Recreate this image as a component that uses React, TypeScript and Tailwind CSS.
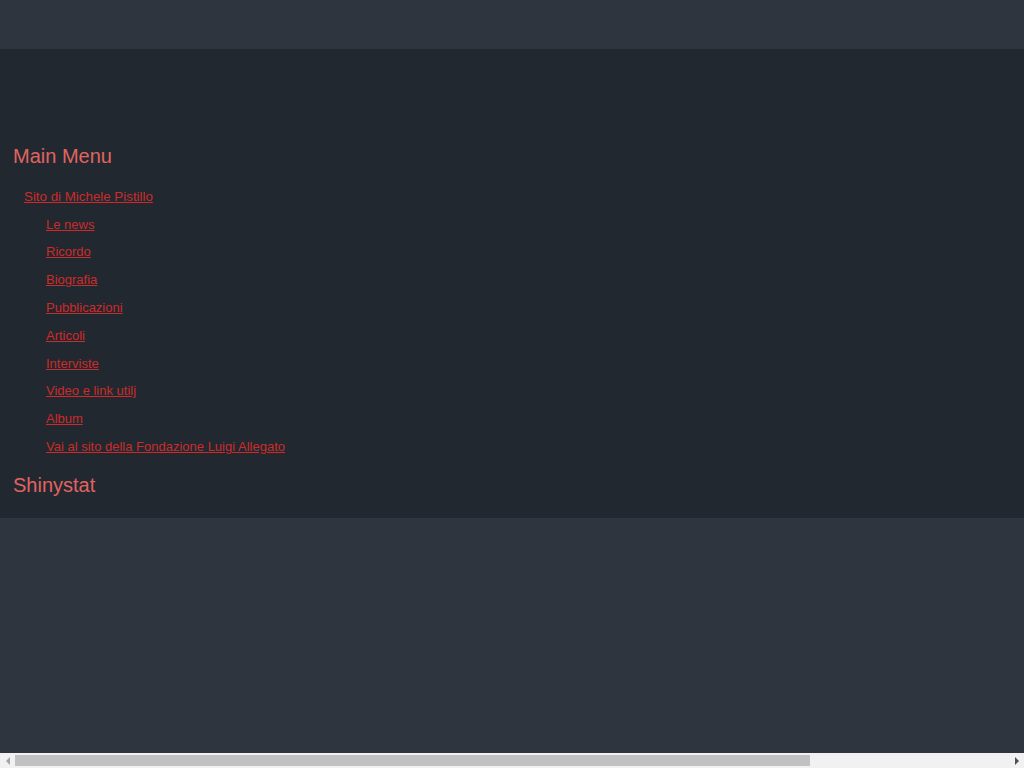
import React from "react";

const subItems = [
  "Le news",
  "Ricordo",
  "Biografia",
  "Pubblicazioni",
  "Articoli",
  "Interviste",
  "Video e link utilj",
  "Album",
  "Vai al sito della Fondazione Luigi Allegato",
];

export default function App() {
  return (
    <div
      className="w-full h-[768px] flex flex-col overflow-hidden bg-[#2e353f]"
      style={{ fontFamily: '"Liberation Sans", Arial, sans-serif' }}
    >
      <div className="flex-1">
        <header className="h-[49px] bg-[#2e353f]" />
        <section className="bg-[#22282f] pt-[96px] pb-[22px] px-[13px]">
          <h2 className="text-[20px] leading-[22px] text-[#e06461]">Main Menu</h2>
          <ul className="mt-[15px]">
            <li className="h-[27.8px] flex items-center pl-[11px] pt-[1px]">
              <a href="#" className="text-[13.33px] leading-[15px] text-[#cc2b2b] underline">
                Sito di Michele Pistillo
              </a>
            </li>
            {subItems.map((t) => (
              <li key={t} className="h-[27.8px] flex items-center pl-[33px] pt-[1px]">
                <a href="#" className="text-[13px] leading-[15px] text-[#cc2b2b] underline">
                  {t}
                </a>
              </li>
            ))}
          </ul>
          <h2 className="mt-[14px] text-[20px] leading-[22px] text-[#e06461]">Shinystat</h2>
        </section>
      </div>
      <div className="h-[15px] shrink-0 bg-[#f1f1f1] flex items-center">
        <div className="w-[15px] h-[15px] flex items-center justify-center">
          <svg width="6" height="8" viewBox="0 0 6 8">
            <polygon points="5,0 5,8 1,4" fill="#a3a3a3" />
          </svg>
        </div>
        <div className="flex-1 h-[15px] flex items-center">
          <div className="w-[795px] h-[11px] bg-[#c1c1c1]" />
        </div>
        <div className="w-[15px] h-[15px] flex items-center justify-center">
          <svg width="6" height="8" viewBox="0 0 6 8">
            <polygon points="1,0 1,8 5,4" fill="#505050" />
          </svg>
        </div>
      </div>
    </div>
  );
}
